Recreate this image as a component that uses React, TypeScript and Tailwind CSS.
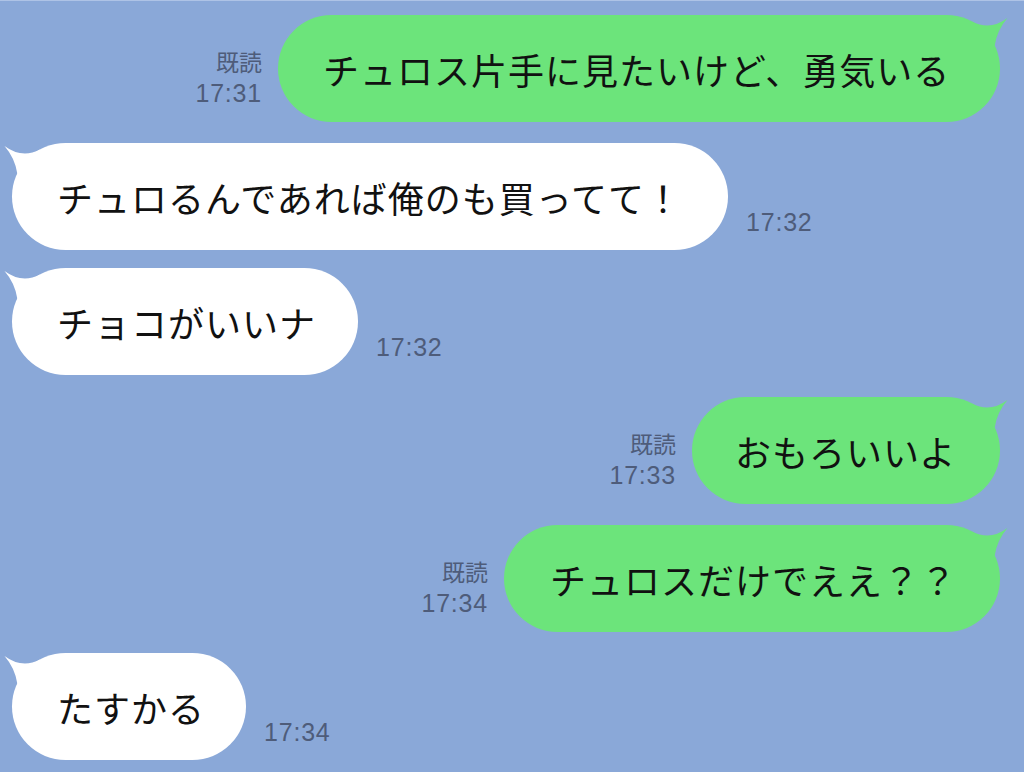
import React from "react";

const JP = { fontFamily: '"Noto Sans CJK JP", "Noto Sans", sans-serif' };
const META = {
  fontFamily: '"Liberation Sans", "Noto Sans CJK JP", sans-serif',
};

function Tail({ color, left }: { color: string; left?: boolean }) {
  return (
    <svg
      width="48"
      height="55"
      viewBox="0 0 48 55"
      className={
        left
          ? "absolute top-[-2px] left-[-8px] -scale-x-100"
          : "absolute top-[-2px] right-[-8px]"
      }
    >
      <path
        d="M12 8.5 Q30 18 47.5 5 Q37 17 34.6 33 L12 33 Z"
        fill={color}
      />
    </svg>
  );
}

function Bubble({
  text,
  width,
  green,
  pl,
}: {
  text: string;
  width: number;
  green?: boolean;
  pl: string;
}) {
  return (
    <div
      className={
        "relative h-[107px] rounded-full flex items-center " +
        (green ? "bg-[#6ce47b] " : "bg-white ") +
        pl
      }
      style={{ width }}
    >
      <Tail color={green ? "#6ce47b" : "#ffffff"} left={!green} />
      <span
        className="relative text-[36px] tracking-[1px] text-[#111111] whitespace-nowrap leading-none"
        style={JP}
      >
        {text}
      </span>
    </div>
  );
}

function Sent({
  text,
  width,
  time,
  mt,
  pl,
}: {
  text: string;
  width: number;
  time: string;
  mt: string;
  pl: string;
}) {
  return (
    <div className={"flex justify-end items-end pr-[24px] " + mt}>
      <div
        className="flex flex-col items-end mr-[16px] mb-[14px] text-[#4e5c7a]"
        style={META}
      >
        <span className="text-[23px] leading-[30px]">既読</span>
        <span className="text-[25px] leading-[30px] tracking-[0.8px]">
          {time}
        </span>
      </div>
      <Bubble text={text} width={width} green pl={pl} />
    </div>
  );
}

function Received({
  text,
  width,
  time,
  mt,
}: {
  text: string;
  width: number;
  time: string;
  mt: string;
}) {
  return (
    <div className={"flex items-end pl-[12px] " + mt}>
      <Bubble text={text} width={width} pl="pl-[45px]" />
      <span
        className="ml-[18px] mb-[16px] text-[25px] leading-[24px] tracking-[0.8px] text-[#4e5c7a]"
        style={META}
      >
        {time}
      </span>
    </div>
  );
}

export default function App() {
  return (
    <div className="w-full h-[772px] overflow-hidden bg-[#8aa8d8] border-t border-[#aec3e6]">
      <Sent
        text="チュロス片手に見たいけど、勇気いる"
        width={722}
        time="17:31"
        mt="mt-[14px]"
        pl="pl-[45px]"
      />
      <Received
        text="チュロるんであれば俺のも買ってて！"
        width={716}
        time="17:32"
        mt="mt-[21px]"
      />
      <Received text="チョコがいいナ" width={346} time="17:32" mt="mt-[18px]" />
      <Sent
        text="おもろいいよ"
        width={308}
        time="17:33"
        mt="mt-[22px]"
        pl="pl-[43px]"
      />
      <Sent
        text="チュロスだけでええ？？"
        width={496}
        time="17:34"
        mt="mt-[21px]"
        pl="pl-[46px]"
      />
      <Received text="たすかる" width={234} time="17:34" mt="mt-[21px]" />
    </div>
  );
}
